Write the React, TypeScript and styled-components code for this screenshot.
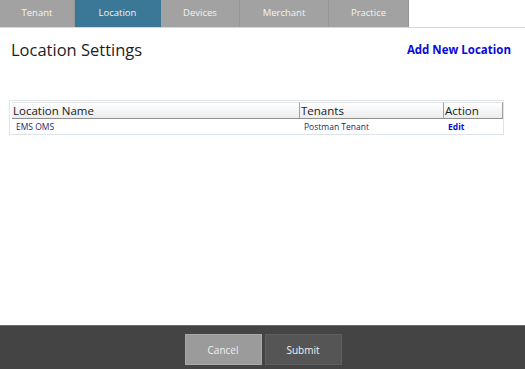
import React from "react";
import styled, { createGlobalStyle } from "styled-components";

const GlobalStyle = createGlobalStyle`
  html, body {
    margin: 0;
    padding: 0;
    background: #ffffff;
    font-family: "Open Sans", "Noto Sans", sans-serif;
  }
  #root {
    height: 369px;
  }
`;

const Page = styled.div`
  display: flex;
  flex-direction: column;
  width: 525px;
  height: 369px;
  overflow: hidden;
`;

const TabBar = styled.div`
  display: flex;
  height: 27px;
  border-bottom: 1px solid #d8d8d8;
`;

const Tab = styled.div<{ $active?: boolean; $w: number }>`
  width: ${(p) => p.$w}px;
  display: flex;
  align-items: center;
  justify-content: center;
  padding-bottom: 2px;
  font-size: 9.5px;
  color: #f4f4f4;
  background: ${(p) => (p.$active ? "#3b7796" : "#a2a2a2")};
  border-right: 1px solid ${(p) => (p.$active ? "#3b7796" : "#969696")};
  box-sizing: border-box;
`;

const Content = styled.div`
  flex: 1;
  padding: 11px 14px 0 9px;
`;

const HeaderRow = styled.div`
  display: flex;
  align-items: center;
  justify-content: space-between;
  height: 21px;
`;

const Title = styled.h1`
  margin: 0 0 0 2px;
  font-size: 16.5px;
  font-weight: 400;
  color: #1e1e1e;
`;

const AddLink = styled.a`
  font-size: 11.5px;
  font-weight: 700;
  color: #0a0ad8;
  text-decoration: none;
`;

const Table = styled.div`
  margin-top: 40px;
  width: 495px;
  border: 1px solid #dce3ea;
  padding: 1px 2px 0 2px;
  box-sizing: border-box;
`;

const Grid = styled.div`
  display: grid;
  grid-template-columns: 288px 144px 59px;
`;

const HeadCell = styled.div`
  height: 15px;
  line-height: 15px;
  font-size: 11.5px;
  color: #1a1a1a;
  padding-left: 1px;
  background: linear-gradient(#ffffff, #ececec);
  border-bottom: 1px solid #8f8f8f;
  border-right: 1px solid #a0a0a0;
  border-top: 1px solid #e4e4e4;
  &:last-child {
    border-right: 2px solid #8a8a8a;
  }
`;

const Cell = styled.div<{ $bold?: boolean }>`
  height: 15px;
  line-height: 15px;
  font-size: 8.5px;
  padding-left: 4px;
  color: ${(p) => (p.$bold ? "#0a0ad8" : "#1d2a6e")};
  font-weight: ${(p) => (p.$bold ? 700 : 400)};
`;

const Footer = styled.div`
  height: 43px;
  background: #444444;
  border-top: 1px solid #6a6a6a;
  display: flex;
  align-items: center;
  justify-content: center;
  gap: 3px;
  padding-left: 1px;
`;

const Button = styled.button<{ $primary?: boolean }>`
  width: 77px;
  height: 31px;
  font-family: inherit;
  font-size: 10px;
  color: #f0f0f0;
  background: ${(p) => (p.$primary ? "#555555" : "#9b9b9b")};
  border: 1px solid ${(p) => (p.$primary ? "#5f5f5f" : "#a8a8a8")};
  margin-top: 4px;
`;

const tabs = [
  { label: "Tenant", w: 75 },
  { label: "Location", w: 86, active: true },
  { label: "Devices", w: 79 },
  { label: "Merchant", w: 89 },
  { label: "Practice", w: 80 },
];

export default function App() {
  return (
    <Page>
      <GlobalStyle />
      <TabBar>
        {tabs.map((t) => (
          <Tab key={t.label} $w={t.w} $active={t.active}>
            {t.label}
          </Tab>
        ))}
      </TabBar>
      <Content>
        <HeaderRow>
          <Title>Location Settings</Title>
          <AddLink href="#">Add New Location</AddLink>
        </HeaderRow>
        <Table>
          <Grid>
            <HeadCell>Location Name</HeadCell>
            <HeadCell>Tenants</HeadCell>
            <HeadCell>Action</HeadCell>
            <Cell>EMS OMS</Cell>
            <Cell>Postman Tenant</Cell>
            <Cell $bold>Edit</Cell>
          </Grid>
        </Table>
      </Content>
      <Footer>
        <Button>Cancel</Button>
        <Button $primary>Submit</Button>
      </Footer>
    </Page>
  );
}
